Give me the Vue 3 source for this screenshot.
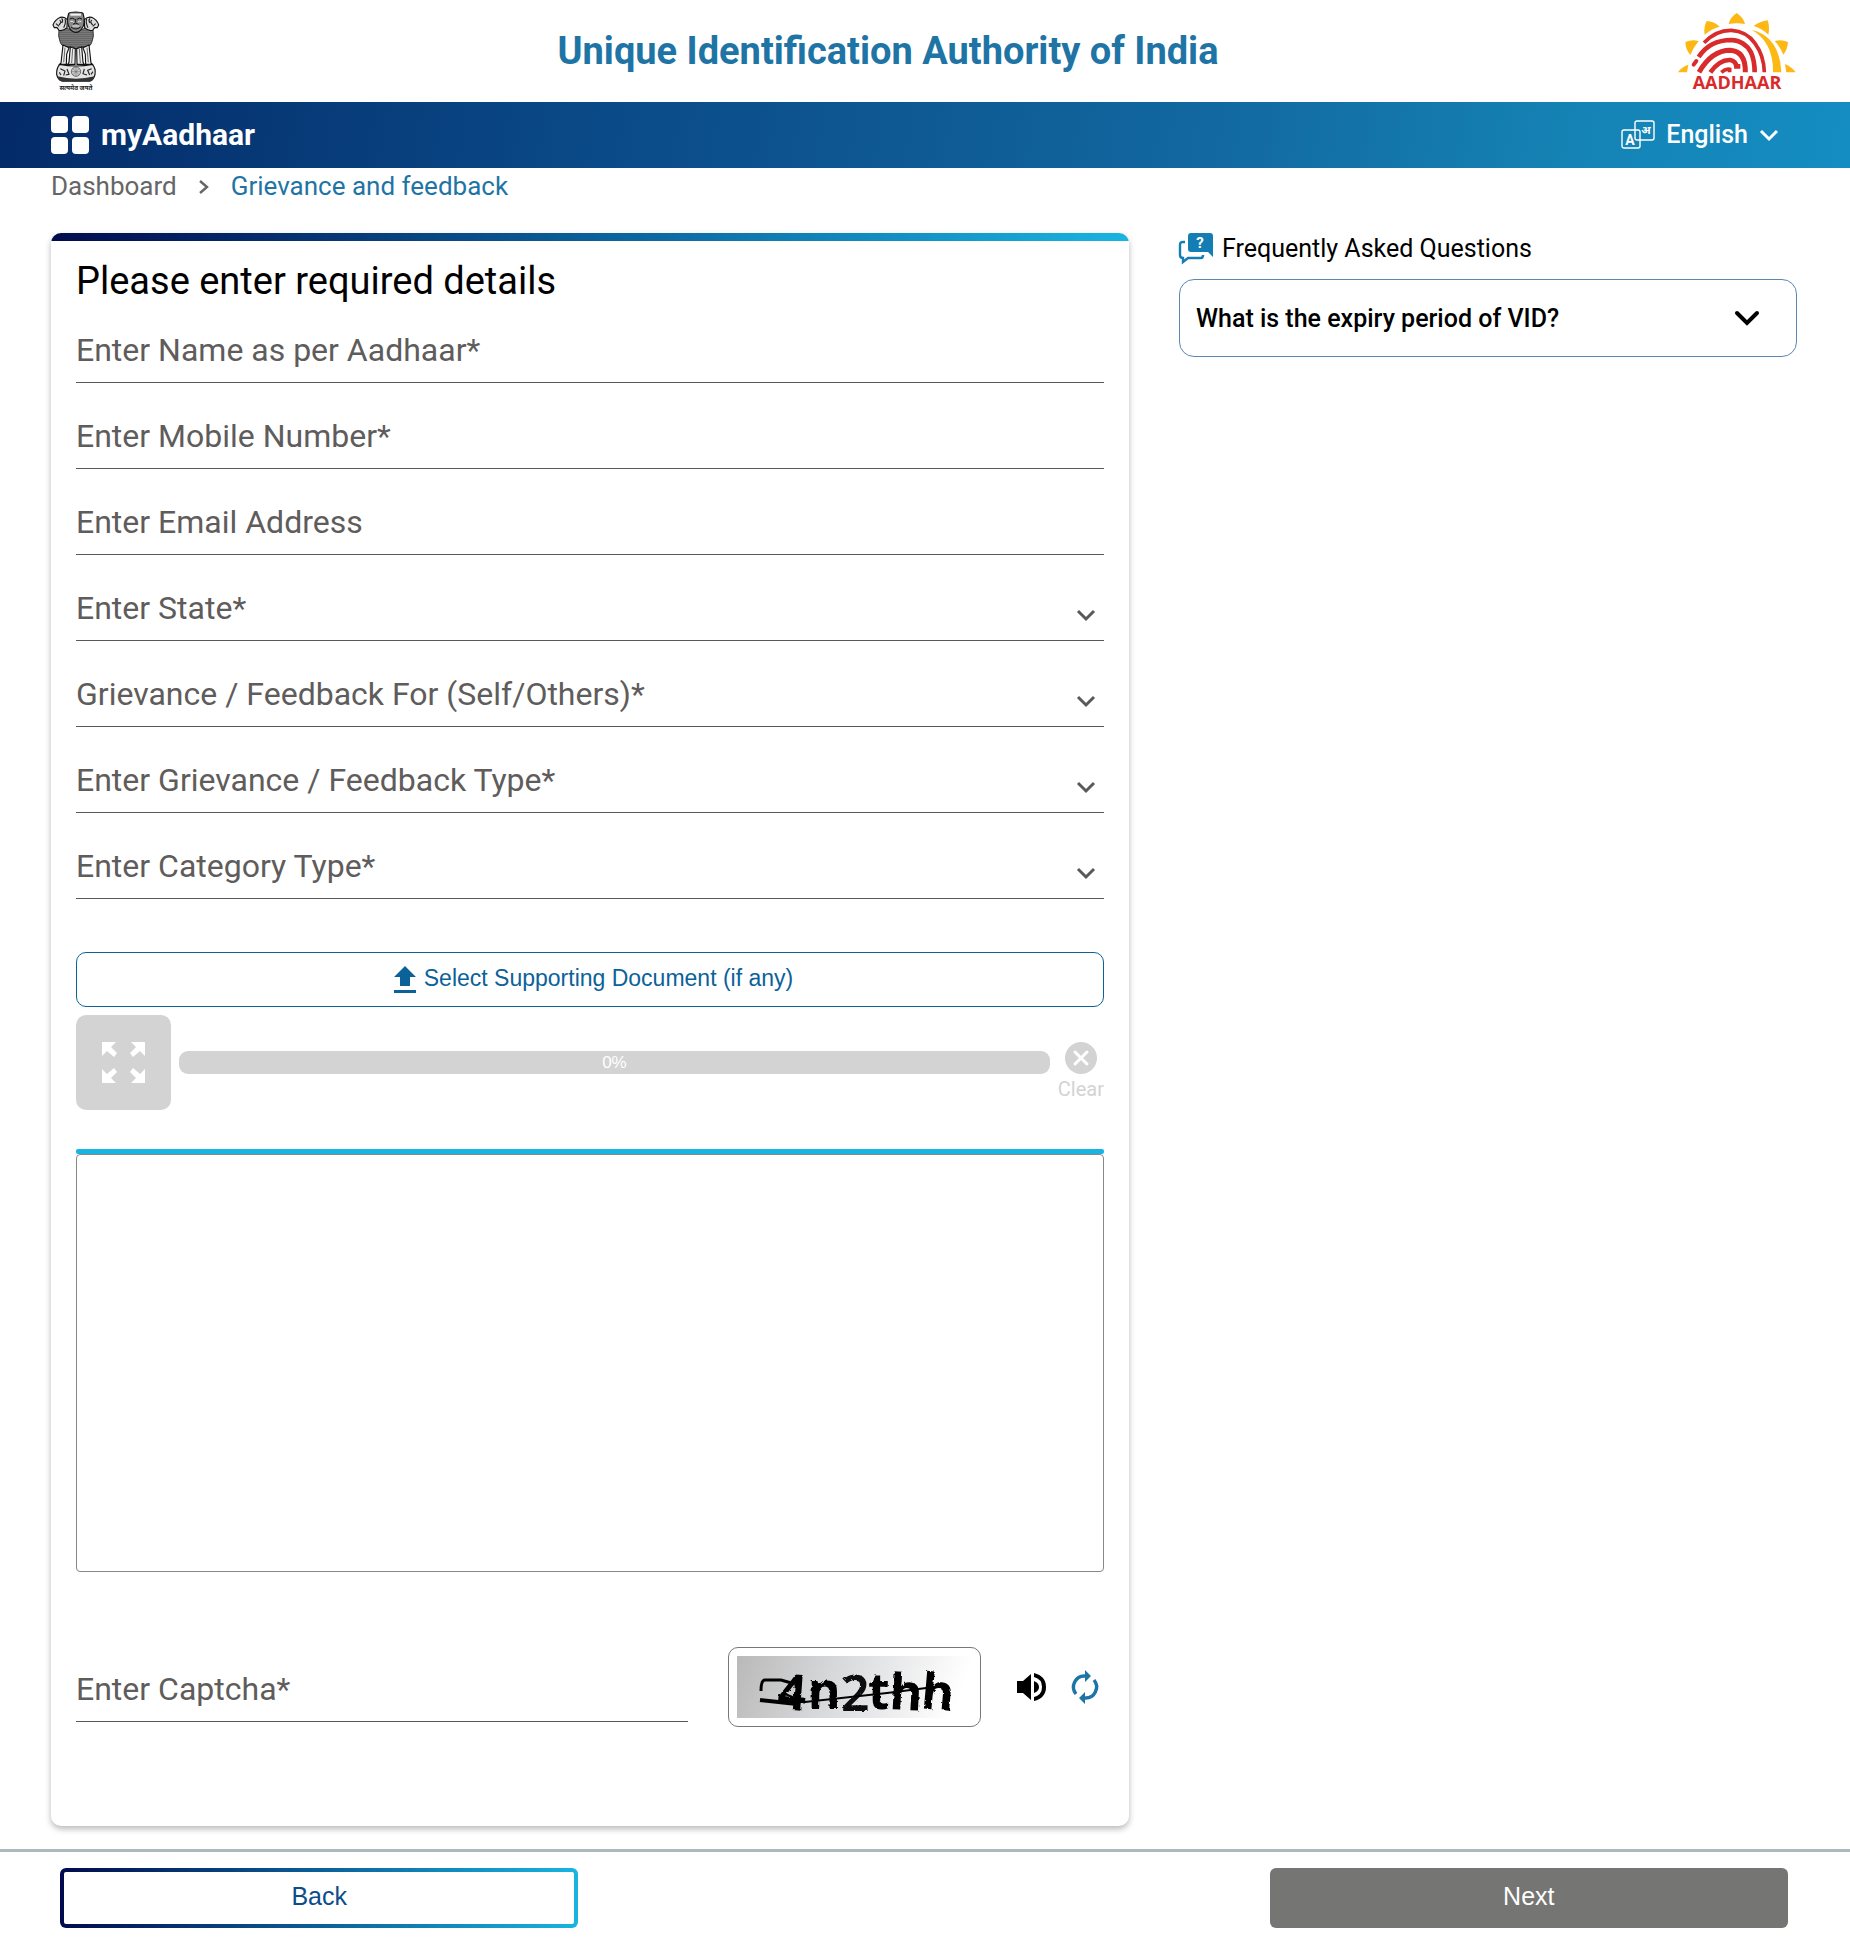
<script setup>
import { reactive } from 'vue'

const fields = [
  { id: 'name', label: 'Enter Name as per Aadhaar*', type: 'text' },
  { id: 'mobile', label: 'Enter Mobile Number*', type: 'tel' },
  { id: 'email', label: 'Enter Email Address', type: 'email' },
  { id: 'state', label: 'Enter State*', type: 'select' },
  { id: 'for', label: 'Grievance / Feedback For (Self/Others)*', type: 'select' },
  { id: 'type', label: 'Enter Grievance / Feedback Type*', type: 'select' },
  { id: 'category', label: 'Enter Category Type*', type: 'select' },
]
const form = reactive({
  name: '', mobile: '', email: '', state: '', for: '', type: '', category: '', message: '', captcha: '',
})
</script>

<template>
  <div class="page">
    <header class="masthead">
      <svg class="emblem" viewBox="35 30 144 243" role="img" aria-label="State Emblem of India">
        <defs>
          <pattern id="mane" width="6" height="6" patternUnits="userSpaceOnUse">
            <rect width="6" height="6" fill="#999" />
            <path d="M0 0L3 3L6 0M0 6L3 3L6 6" stroke="#222" stroke-width="1.3" fill="none" />
            <circle cx="3" cy="0" r="1.2" fill="#eee" />
          </pattern>
        </defs>
        <path d="M56 86Q62 78 80 82L106 92L134 82Q152 78 158 88Q162 106 155 122Q150 138 138 138L120 136L107 143L94 136L80 138Q64 138 59 122Q52 104 56 86Z" fill="url(#mane)" stroke="#222" stroke-width="2.4" />
        <path d="M68 132L62 186L58 190H78L79 160L86 140ZM146 132L152 186L156 190H136L135 160L128 140ZM90 138L86 184L82 190H104L105 143ZM124 138L128 184L132 190H110L109 143Z" fill="#eee" stroke="#111" stroke-width="3.4" />
        <path d="M74 140L70 184M140 140L144 184M97 144L94 186M117 144L120 186" stroke="#444" stroke-width="2.4" fill="none" />
        <path d="M85 37Q88 33 106 33Q124 33 128 37L131 50Q134 70 126 80Q118 94 106 94Q94 93 87 80Q80 68 82 50Z" fill="#888" stroke="#111" stroke-width="3.4" />
        <path d="M90 38H122V44H90Z" fill="#f2f2f2" />
        <path d="M88 54Q96 48 103 55M110 55Q117 48 125 54M98 70Q106 62 115 70M92 78Q106 90 121 78M106 54V64" fill="none" stroke="#111" stroke-width="3" />
        <path d="M90 62Q96 58 100 64M112 64Q117 58 123 62M96 75H117" fill="none" stroke="#f2f2f2" stroke-width="3" />
        <path d="M81 56Q72 46 60 49Q44 56 38 72L42 80L50 80L56 88Q68 92 80 80Z" fill="#ddd" stroke="#111" stroke-width="3.4" />
        <path d="M132 56Q142 46 154 49Q170 56 175 72L171 80L163 80L157 88Q145 92 133 80Z" fill="#ddd" stroke="#111" stroke-width="3.4" />
        <path d="M58 58Q66 62 56 72M64 52Q70 58 64 66M74 54Q78 64 70 80M47 68L56 76M155 58Q147 62 157 72M149 52Q143 58 149 66M139 54Q135 64 143 80M166 68L157 76" fill="none" stroke="#222" stroke-width="3.4" />
        <path d="M58 190Q107 200 156 190Q167 202 164 220Q160 238 148 240H66Q52 236 49 220Q48 202 58 190Z" fill="#e4e4e4" stroke="#111" stroke-width="3.6" />
        <path d="M51 226Q107 240 163 226Q158 240 148 242H66Q54 240 51 226Z" fill="#333" />
        <circle cx="107" cy="212" r="14" fill="#ccc" stroke="#555" stroke-width="2.4" />
        <path d="M107 198V226M93 212H121M97 202L117 222M117 202L97 222" stroke="#666" stroke-width="1.6" />
        <path d="M60 203L74 210L70 224M80 204L86 220L76 222M132 204L128 218L140 222M154 203L142 208L148 222M57 214L62 222M158 212L152 220" fill="none" stroke="#222" stroke-width="3.4" />
        <text x="107" y="268" text-anchor="middle" class="motto">सत्यमेव जयते</text>
      </svg>
      <h1>Unique Identification Authority of India</h1>
      <svg class="aadhaar" viewBox="349 31 366 243" role="img" aria-label="Aadhaar">
        <g fill="#fdb813">
          <path d="M531 37Q551 50 556 70Q531 66 507 70Q511 50 531 37Z" />
          <path d="M441 61Q463 62 480 78Q456 84 435 102Q431 79 441 61Z" />
          <path d="M624 59Q631 80 626 102Q608 84 582 76Q601 62 624 59Z" />
          <path d="M377 124Q396 116 417 121Q402 139 392 163Q377 145 377 124Z" />
          <path d="M685 124Q684 145 671 162Q661 137 645 121Q666 116 685 124Z" />
          <path d="M355 215Q366 198 386 192L382 215Z" />
          <path d="M708 215Q696 198 676 190L680 215Z" />
          <path d="M576 87Q660 108 665 215H640Q642 125 576 87Z" />
        </g>
        <g fill="none" stroke="#d92b2b">
          <path d="M433 126Q470 88 515 89Q560 91 586 128Q613 165 614 215" stroke-width="11" />
          <path d="M417 169Q450 118 515 118Q555 120 574 155Q585 180 585 215" stroke-width="14" />
          <path d="M418 215Q456 149 512 149Q558 152 557 215" stroke-width="15" />
          <path d="M452 215Q480 176 512 178Q529 182 530 197H542" stroke-width="14" />
          <path d="M485 215Q498 203 510 206V215" stroke-width="11" />
          <path d="M410 181L402 192" stroke-width="12" stroke-linecap="round" />
        </g>
        <text x="532" y="265" text-anchor="middle" class="logo-word">AADHAAR</text>
      </svg>
    </header>

    <nav class="bar">
      <a class="brand" href="#">
        <svg width="38" height="38" viewBox="0 0 38 38" fill="#fff" aria-hidden="true">
          <rect width="17" height="17" rx="4" /><rect x="21" width="17" height="17" rx="4" />
          <rect y="21" width="17" height="17" rx="4" /><rect x="21" y="21" width="17" height="17" rx="4" />
        </svg>
        <span>myAadhaar</span>
      </a>
      <button type="button" class="lang">
        <svg width="34" height="30" viewBox="0 0 34 30" fill="none" stroke="#fff" aria-hidden="true">
          <rect x="1" y="10" width="18" height="18" rx="2" stroke-width="1.4" />
          <rect x="14" y="1" width="19" height="19" rx="2" stroke-width="1.4" />
          <text x="9" y="25" text-anchor="middle" class="lang-a">A</text>
          <text x="25" y="14" text-anchor="middle" class="lang-hi">अ</text>
        </svg>
        <span>English</span>
        <svg width="20" height="14" viewBox="0 0 20 14" aria-hidden="true"><path d="M2 3L10 11L18 3" fill="none" stroke="#fff" stroke-width="3" /></svg>
      </button>
    </nav>

    <nav class="crumbs" aria-label="Breadcrumb">
      <a href="#">Dashboard</a>
      <svg width="10" height="16" viewBox="0 0 10 16" aria-hidden="true"><path d="M1 2L8 8L1 14" fill="none" stroke="#666" stroke-width="2.4" /></svg>
      <a href="#" class="current">Grievance and feedback</a>
    </nav>

    <main class="columns">
      <form class="card" @submit.prevent>
        <div class="strip"></div>
        <div class="body">
          <h2>Please enter required details</h2>
          <div class="fields">
            <div v-for="f in fields" :key="f.id" class="field">
              <label :for="f.id">{{ f.label }}</label>
              <template v-if="f.type === 'select'">
                <select :id="f.id" v-model="form[f.id]"></select>
                <svg class="arrow" width="18" height="12" viewBox="0 0 18 12" aria-hidden="true"><path d="M1 1L9 9L17 1" fill="none" stroke="#5a5858" stroke-width="3" /></svg>
              </template>
              <input v-else :id="f.id" v-model="form[f.id]" :type="f.type" />
            </div>
          </div>

          <button type="button" class="upload">
            <svg width="22" height="27" viewBox="0 0 22 27" fill="#0b6299" aria-hidden="true"><path d="M11 0L22 11H16V20H6V11H0ZM0 24H22V27H0Z" /></svg>
            <span>Select Supporting Document (if any)</span>
          </button>

          <div class="progress-row">
            <button type="button" class="expand" aria-label="Preview document">
              <svg width="43" height="41" viewBox="0 0 43 41" fill="#fff" aria-hidden="true">
                <path d="M0 0H14L9 5L15 11L12 15L5 9L0 14Z" />
                <path d="M43 0H29L34 5L28 11L31 15L38 9L43 14Z" />
                <path d="M0 41H14L9 36L15 30L12 26L5 32L0 27Z" />
                <path d="M43 41H29L34 36L28 30L31 26L38 32L43 27Z" />
              </svg>
            </button>
            <div class="progress" role="progressbar" aria-valuenow="0" aria-valuemin="0" aria-valuemax="100">0%</div>
            <button type="button" class="clear">
              <svg width="32" height="32" viewBox="0 0 32 32" aria-hidden="true"><circle cx="16" cy="16" r="16" fill="#d3d3d3" /><path d="M10 10L22 22M22 10L10 22" stroke="#fff" stroke-width="3" stroke-linecap="round" /></svg>
              <span>Clear</span>
            </button>
          </div>

          <div class="accent"></div>
          <textarea v-model="form.message" aria-label="Grievance details"></textarea>

          <div class="captcha-row">
            <div class="field">
              <label for="captcha">Enter Captcha*</label>
              <input id="captcha" v-model="form.captcha" type="text" />
            </div>
            <div class="captcha">
              <svg width="235" height="62" viewBox="0 0 235 62" role="img" aria-label="Captcha">
                <defs>
                  <linearGradient id="haze" x1="0" x2="1" y1="0" y2="0.1">
                    <stop offset="0" stop-color="#b9b9b9" /><stop offset="0.5" stop-color="#dcdddf" /><stop offset="1" stop-color="#fff" />
                  </linearGradient>
                  <filter id="rough" x="-10%" y="-10%" width="120%" height="120%">
                    <feTurbulence type="fractalNoise" baseFrequency="0.25" numOctaves="2" seed="4" />
                    <feDisplacementMap in="SourceGraphic" scale="3" />
                    <feGaussianBlur stdDeviation="0.6" />
                  </filter>
                </defs>
                <rect width="235" height="62" fill="url(#haze)" />
                <g filter="url(#rough)">
                  <text x="41" y="54" class="glyph" transform="rotate(4 56 36)">4</text>
                  <text x="71" y="53" class="glyph">n</text>
                  <text x="104" y="55" class="glyph two">2</text>
                  <text x="131" y="53" class="glyph">t</text>
                  <text x="153" y="54" class="glyph" transform="rotate(3 172 34)">h</text>
                  <text x="185" y="54" class="glyph" transform="rotate(5 204 34)">h</text>
                </g>
                <g fill="none" stroke="#000">
                  <path d="M24 35Q24 24 28 24H44L58 28" stroke-width="3" />
                  <path d="M23 44L60 48" stroke-width="4" />
                  <path d="M48 38L68 46L150 37L205 30" stroke-width="2" />
                </g>
              </svg>
            </div>
            <button type="button" class="icon-btn" aria-label="Play captcha audio">
              <svg width="30" height="28" viewBox="0 0 30 28" aria-hidden="true">
                <path d="M0 8H6L14 1V27L6 20H0Z" />
                <path d="M17 0Q29 3 29 14T17 28V24Q25 22 25 14T17 4Z" />
                <path d="M17 8Q22 10 22 14T17 20Z" />
              </svg>
            </button>
            <button type="button" class="icon-btn" aria-label="Refresh captcha">
              <svg width="26" height="34" viewBox="0 0 26 34" aria-hidden="true">
                <g fill="none" stroke="#1f74a6" stroke-width="3.4"><path d="M4 24A11 11 0 0 1 13 6" /><path d="M22 10A11 11 0 0 1 13 28" /></g>
                <path d="M13 0L19 6L13 12ZM13 22L7 28L13 34Z" fill="#1f74a6" />
              </svg>
            </button>
          </div>
        </div>
      </form>

      <aside class="faq">
        <h3>
          <svg width="34" height="32" viewBox="0 0 34 32" aria-hidden="true">
            <path d="M12 0H31Q34 0 34 3V24L29 19H12Q9 19 9 16V3Q9 0 12 0Z" fill="#147db3" />
            <path d="M6 9H4Q1 9 1 12V22Q1 25 4 25V29L9 25H22Q24 25 24 22" fill="none" stroke="#147db3" stroke-width="2.4" />
            <text x="21" y="15" text-anchor="middle" class="q">?</text>
          </svg>
          <span>Frequently Asked Questions</span>
        </h3>
        <button type="button" class="question">
          <span>What is the expiry period of VID?</span>
          <svg width="24" height="16" viewBox="0 0 24 16" aria-hidden="true"><path d="M2 3L12 13L22 3" fill="none" stroke="#000" stroke-width="4" stroke-linecap="round" /></svg>
        </button>
      </aside>
    </main>

    <footer class="actions">
      <button type="button" class="back">Back</button>
      <button type="button" class="next">Next</button>
    </footer>
  </div>
</template>

<style>
body { margin: 0; background: #fff; }
</style>

<style scoped>
.page { font-family: Roboto, "Noto Sans", sans-serif; color: #000; }
.page * { box-sizing: border-box; }
svg { display: block; flex: none; overflow: visible; }
h1, h2, h3 { margin: 0; }
button { font: inherit; padding: 0; border: 0; background: none; color: inherit; cursor: pointer; }
a { text-decoration: none; color: inherit; }

.masthead { height: 102px; padding: 0 52px; display: flex; justify-content: space-between; align-items: center; }
.emblem { width: 48px; height: 81px; }
.motto { font: 700 19px "Noto Sans", sans-serif; fill: #222; }
.aadhaar { width: 122px; height: 81px; }
.logo-word { font: 700 54px "Open Sans", sans-serif; fill: #d92b2b; }
h1 { font-size: 38px; line-height: 48px; font-weight: 700; color: #1f74a6; }

.bar { height: 66px; padding: 0 71px 0 51px; display: flex; justify-content: space-between; align-items: center; color: #fff; background: linear-gradient(100deg, #042a68, #0b4c8a 35%, #1268a0 65%, #1583b5 85%, #148dc2); }
.brand { display: flex; align-items: center; gap: 12px; font-size: 30px; font-weight: 700; line-height: 40px; }
.lang { display: flex; align-items: center; gap: 11px; font-size: 25px; font-weight: 500; line-height: 32px; }
.lang-a { font: 700 14px Roboto, sans-serif; fill: #fff; stroke: none; }
.lang-hi { font: 700 11px "Noto Sans", sans-serif; fill: #fff; stroke: none; }

.crumbs { display: flex; align-items: center; gap: 22px; padding: 0 51px; height: 37px; font-size: 26px; line-height: 37px; color: #666; }
.crumbs .current { color: #1f74a6; }

.columns { display: grid; grid-template-columns: minmax(0, 1078fr) minmax(0, 618fr); gap: 50px; padding: 28px 53px 23px 51px; align-items: start; }
.card { border-radius: 10px; overflow: hidden; box-shadow: 0 3px 6px rgba(0, 0, 0, 0.28); }
.strip { height: 8px; background: linear-gradient(90deg, #010b4d, #0b5f98 50%, #19b4e0); }
.body { padding: 17px 25px 99px; }
h2 { font-size: 38px; font-weight: 400; line-height: 46px; margin-bottom: 24px; }
.fields { display: grid; gap: 31px; }
.field { display: grid; height: 55px; border-bottom: 1px solid #5a5858; }
.field > * { grid-area: 1 / 1; }
.field label { font-size: 32px; line-height: 45px; color: #5f5c5c; pointer-events: none; z-index: 1; }
.field input, .field select { width: 100%; height: 100%; border: 0; padding: 0; background: none; font: inherit; font-size: 32px; appearance: none; outline: none; }
.arrow { justify-self: end; align-self: end; margin: 0 9px 18px 0; }

.upload { margin-top: 53px; width: 100%; height: 55px; border: 1px solid #0b6299; border-radius: 10px; color: #0b6299; display: flex; align-items: center; justify-content: center; gap: 8px; padding-left: 7px; font: 23px/48px "Liberation Sans", sans-serif; }
.upload span { padding-bottom: 4px; }
.progress-row { margin-top: 8px; display: flex; align-items: center; gap: 8px; }
.expand { width: 95px; height: 95px; border-radius: 10px; background: #d3d3d3; display: grid; place-items: center; }
.progress { flex: 1; height: 23px; border-radius: 9px; background: #d3d3d3; color: #fff; text-align: center; font: 17px/23px "Liberation Sans", sans-serif; }
.clear { display: flex; flex-direction: column; align-items: center; padding-top: 20px; color: #d3d3d3; font-size: 20px; line-height: 30px; }

.accent { height: 5px; margin-top: 39px; border-radius: 2px; background: #19b4e0; }
textarea { display: block; width: 100%; height: 418px; border: 1px solid #8a8787; border-radius: 4px; resize: none; outline: none; padding: 12px; font: inherit; font-size: 24px; }

.captcha-row { margin-top: 75px; display: flex; align-items: center; }
.captcha-row .field { flex: 1; margin: 14px 40px 0 0; }
.captcha { border: 1px solid #777; border-radius: 10px; padding: 8px; margin-right: 36px; }
.glyph { font: 700 50px "Noto Sans", sans-serif; }
.two { font-weight: 600; fill: #111; }
.icon-btn + .icon-btn { margin: 0 6px 0 25px; }

.faq h3 { display: flex; align-items: center; gap: 9px; font-size: 25px; line-height: 32px; font-weight: 400; margin-bottom: 14px; }
.q { font: 700 15px Roboto, sans-serif; fill: #fff; }
.question { width: 100%; height: 78px; border: 1px solid #5b87b0; border-radius: 15px; padding: 0 37px 0 16px; display: flex; align-items: center; justify-content: space-between; font-size: 25px; font-weight: 500; }

.actions { border-top: 3px solid #adb8bd; padding: 16px 62px 14px 60px; display: flex; justify-content: space-between; }
.actions button { width: 30%; height: 60px; border-radius: 6px; padding-bottom: 4px; font: 25px/48px "Liberation Sans", sans-serif; }
.back { border: 4px solid transparent; color: #0b4c8a; background: linear-gradient(#fff, #fff) padding-box, linear-gradient(90deg, #010b4d, #0b5f98 50%, #19b4e0) border-box; }
.next { background: #757573; color: #fff; }
</style>
